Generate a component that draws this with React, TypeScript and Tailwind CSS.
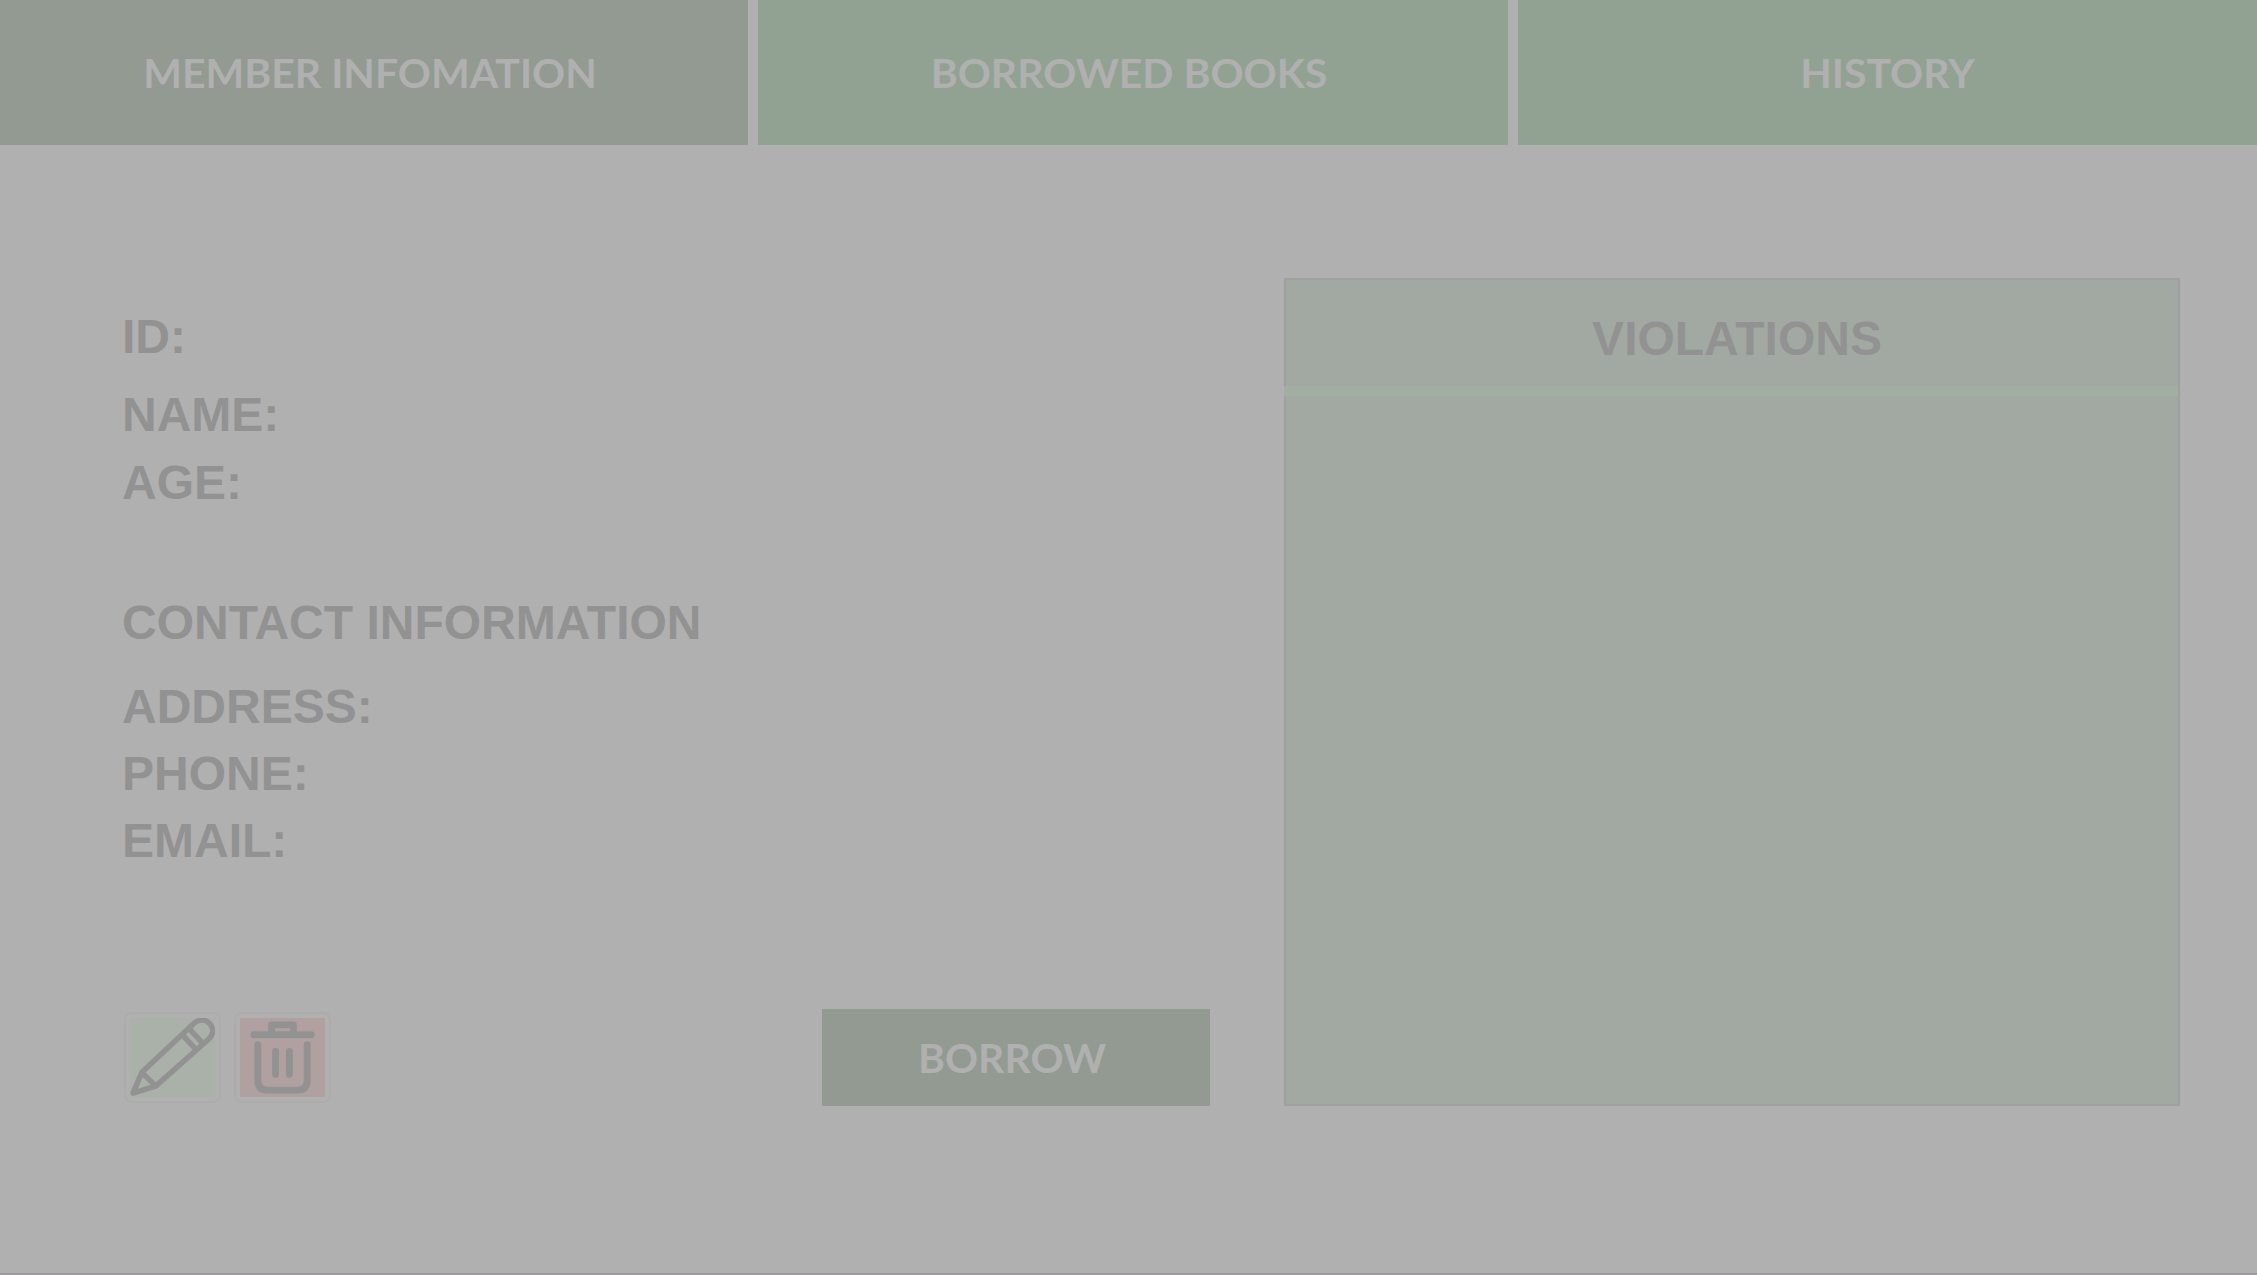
const sans = 'font-["Liberation_Sans",Arial,sans-serif]';

function Field({ label, className = '' }: { label: string; className?: string }) {
  return (
    <div className={`flex ${className}`}>
      <dt>{label}</dt>
      <dd />
    </div>
  );
}

function PencilIcon() {
  return (
    <svg viewBox="0 0 86 80" className="h-full w-full" fill="none" stroke="#929292" strokeWidth="5.5" strokeLinejoin="round" aria-hidden="true">
      <path d="M3 76 L12 55 L64 6 C69 1 76 1 80 5 C85 10 85 16 80 21 L26 69 Z" />
      <path d="M12 55 L26 69" />
      <path d="M53 17 L67 32" />
      <path d="M60 11 L74 26" />
    </svg>
  );
}

function TrashIcon() {
  return (
    <svg viewBox="0 0 86 80" className="h-full w-full" fill="none" stroke="#929292" strokeWidth="7" strokeLinecap="round" strokeLinejoin="round" aria-hidden="true">
      <path d="M14 17 H72" />
      <path d="M32 16 V7 H54 V16" />
      <path d="M18 27 V63 Q18 73 28 73 H58 Q68 73 68 63 V27" />
      <path d="M36 34 V57 M50 34 V57" />
    </svg>
  );
}

const tab = 'h-[145px] pt-px text-center text-[41px] font-bold';

export default function App() {
  return (
    <div className={`flex min-h-screen flex-col border-b-2 border-[#9e9b9e] bg-[#b0b0b0] text-[#929292] ${sans}`}>
      <nav className='grid grid-cols-[748fr_750fr_739fr] gap-[10px] font-[Lato,Carlito,sans-serif] text-[#b0b0b0]'>
        <button type="button" className={`${tab} bg-[#929a91] pr-2`}>MEMBER INFOMATION</button>
        <button type="button" className={`${tab} bg-[#91a293] pr-2`}>BORROWED BOOKS</button>
        <button type="button" className={`${tab} bg-[#91a293]`}>HISTORY</button>
      </nav>

      <main className="flex pt-[133px] pr-[77px] pb-10 pl-[122px]">
        <section className="flex-1 pt-[25px] pr-[74px] text-[48px] leading-[68px] font-bold">
          <dl>
            <Field label="ID:" />
            <Field label="NAME:" className="mt-[10px]" />
            <Field label="AGE:" />
          </dl>
          <h2 className="mt-[72px]">CONTACT INFORMATION</h2>
          <dl className="mt-4 leading-[67px]">
            <Field label="ADDRESS:" />
            <Field label="PHONE:" />
            <Field label="EMAIL:" />
          </dl>
          <div className="mt-[135px] flex items-center justify-between">
            <div className="flex gap-[13px] pl-[2px]">
              <button type="button" aria-label="Edit member" className="h-[91px] w-[97px] rounded-lg border-2 border-[#acacac] p-1">
                <span className="block h-full bg-[#a9b1a8]"><PencilIcon /></span>
              </button>
              <button type="button" aria-label="Delete member" className="h-[91px] w-[97px] rounded-lg border-2 border-[#acacac] p-1">
                <span className="block h-full bg-[#b0a1a0]"><TrashIcon /></span>
              </button>
            </div>
            <button type="button" className='h-[97px] w-[388px] bg-[#929a91] pr-2 text-center font-[Lato,Carlito,sans-serif] text-[41px] text-[#b0b0b0]'>
              BORROW
            </button>
          </div>
        </section>

        <aside className="w-[896px] max-w-[44%] border-2 border-[#a0a0a0] bg-[#a2a9a2]">
          <h2 className="h-[106px] pt-[25px] pl-[10px] text-center text-[48px] leading-[68px] font-bold">VIOLATIONS</h2>
          <hr className="-ml-[2px] h-[10px] border-0 bg-[#a2aea2]" />
        </aside>
      </main>
    </div>
  );
}
